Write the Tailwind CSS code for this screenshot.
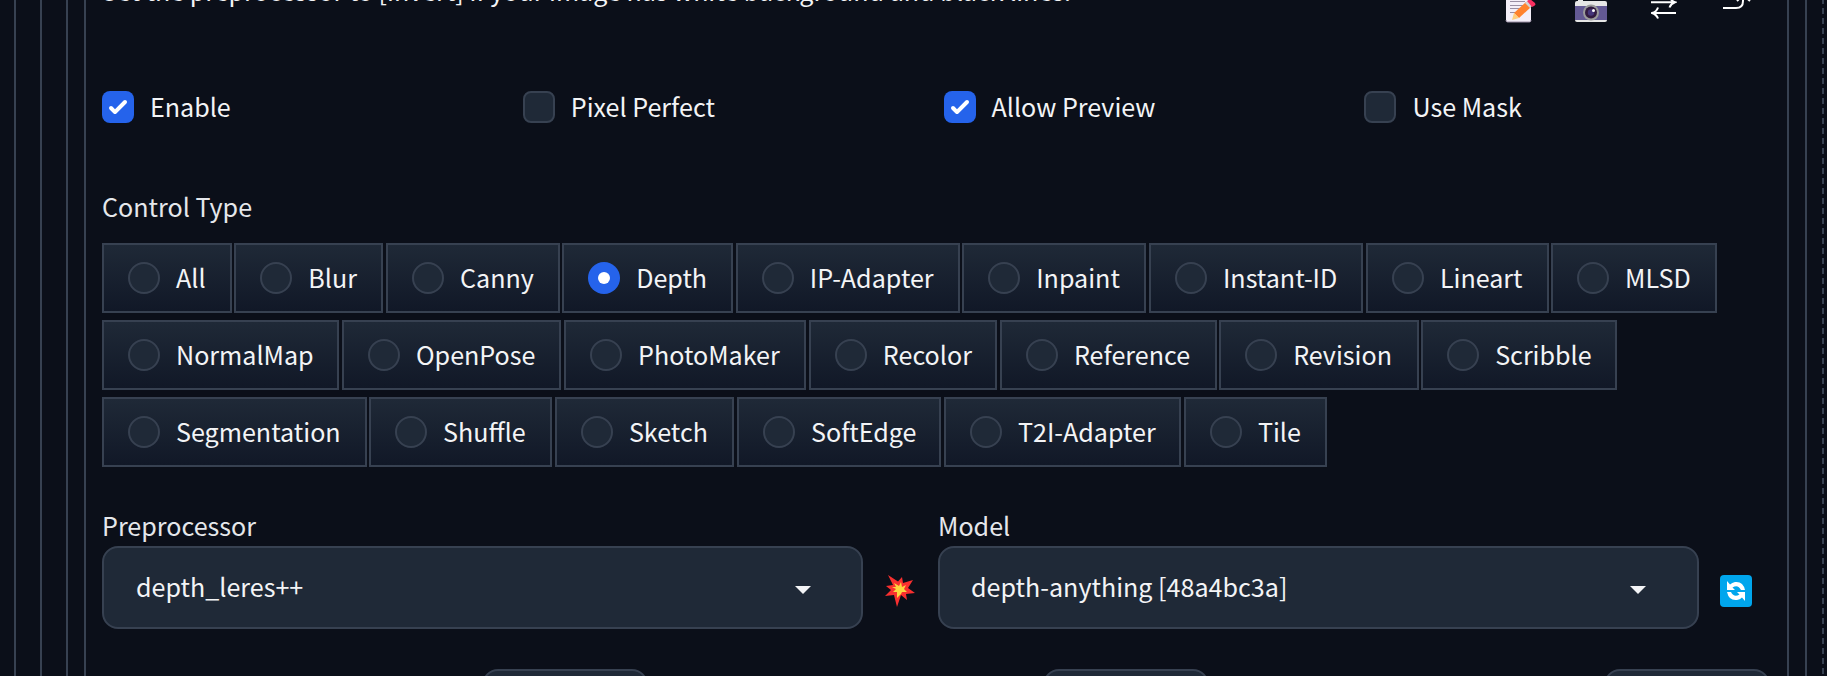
<!DOCTYPE html>
<html lang="en">

<head>
    <meta charset="UTF-8" />
    <meta name="viewport" content="width=device-width, initial-scale=1.0" />
    <title>ControlNet</title>

    <!-- TailwindCSS -->
    <script src="https://cdn.jsdelivr.net/npm/@tailwindcss/browser@4"></script>
    <style>
        body {
            font-family: "Noto Sans CJK SC", "Noto Sans", sans-serif;
        }
    </style>
</head>

<body class="bg-[#0b0f19] text-gray-100 text-[25.1px] leading-[42px]">
    <!-- Nested panel borders -->
    <div class="h-[676px] w-[1827px] overflow-hidden flex pl-[14px] pr-[3px]">
        <div class="flex-1 flex border-l-2 border-[#374151] pl-6">
            <div class="flex-1 flex border-l-2 border-[#374151] pl-6">
                <div class="flex-1 flex border-l-2 border-r-2 border-[#374151] pl-4 pr-4">
                    <div class="flex-1 border-l-2 border-r-2 border-[#374151] pl-4">

                        <!-- Hint and toolbar -->
                        <div class="h-[26px] flex justify-between">
                            <p id="hint" class="-mt-[31px] text-[25.05px] whitespace-nowrap">Set the preprocessor to [invert] If your image has white background and black lines.</p>
                            <div class="flex mr-[36px]">
                                <svg class="w-8 h-6 mr-[38px]" viewBox="0 0 32 24">
                                    <path d="M1 -8H26V20.500Q26 22 24.500 22H2.500Q1 22 1 20.500Z" fill="#f3eef8" />
                                    <path d="M1 20Q1 22 2.500 22H24.500Q26 22 26 20" fill="none" stroke="#998ea4" />
                                    <path d="M5 1.500H20M5 5.500H18M5 8.500H15M5 12.500H11" stroke="#998ea4" stroke-width="1.200" />
                                    <path d="M9 13L21 2L26 7L14 18Z" fill="#ff822d" />
                                    <path d="M9 13L14 18L7 20Z" fill="#ffce7c" />
                                    <path d="M20 3L22 1L27 6L25 8Z" fill="#d3d3d3" />
                                    <path d="M22 1L25 -1L30 3Q31 5 29 6L27 7Z" fill="#f92f60" />
                                </svg>
                                <svg class="w-8 h-6 mr-[44px]" viewBox="0 0 32 24">
                                    <rect x="3" y="-2" width="5" height="5" fill="#e6e6e6" />
                                    <rect y="1" width="32" height="21" rx="2" fill="#e6e6e6" />
                                    <rect y="6" width="32" height="14" fill="#635994" />
                                    <circle cx="16" cy="12.500" r="8" fill="#9b9b9b" />
                                    <circle cx="16" cy="12.500" r="6" fill="#321b41" />
                                    <circle cx="16" cy="12.500" r="3.200" fill="#46367a" />
                                    <circle cx="18.500" cy="10.500" r="1.500" fill="#fff" />
                                </svg>
                                <svg class="w-[26px] h-6 mr-[46px]" viewBox="0 0 26 24" fill="none" stroke="#fff" stroke-width="2">
                                    <path d="M0 2.200H23M18 -4Q20 1 24 2.200Q20 3.500 18.500 7.500M25 13H2M7 7.500Q5.500 12 1 13Q5.500 14.500 7 18.500" />
                                </svg>
                                <svg class="w-7 h-6" viewBox="0 0 28 24" fill="none" stroke="#fff" stroke-width="2">
                                    <path d="M0 8H13Q20 8 20 1V-5M14 1L20 -5L27 1" />
                                </svg>
                            </div>
                        </div>

                        <!-- Options -->
                        <div id="options" class="mt-[60px] flex"></div>

                        <!-- Control type -->
                        <div class="mt-[57px] text-gray-200">Control Type</div>
                        <div id="types" class="mt-4 flex flex-wrap gap-x-[2.6px] gap-y-[7px]"></div>

                        <!-- Dropdowns -->
                        <div class="mt-[37px] flex">
                            <div class="w-[761px]">
                                <div class="text-gray-200">Preprocessor</div>
                                <div class="h-[83px] flex items-center justify-between rounded-2xl border-2 border-[#374151] bg-[#1f2937] pl-8 pr-[50px]">
                                    <span class="-mt-[4px]">depth_leres++</span>
                                    <svg class="w-4 h-2 mt-[4px]" viewBox="0 0 16 8" fill="#f3f4f6"><path d="M0 0H16L8 8Z" /></svg>
                                </div>
                            </div>
                            <svg class="w-[30px] h-8 mt-[71px] ml-[22px] mr-[23px]" viewBox="0 0 30 32">
                                <path d="M3 0L13 6.500L17 2L18 8L28 5L23 13L30 18L21 19L22 25L16 20L12 32L9 20L0 21L6 15L1 11L8 10Z" fill="#f92f2f" />
                                <path d="M9 8L14 11L16 7L17 12L21 10L19 14L22 17L17 17L16 19L12 23L12 17L8 17L11 14L7 12L11 12Z" fill="#fcd53f" />
                            </svg>
                            <div class="w-[761px]">
                                <div class="text-gray-200">Model</div>
                                <div class="h-[83px] flex items-center justify-between rounded-2xl border-2 border-[#374151] bg-[#1f2937] pl-[31px] pr-[51px]">
                                    <span class="-mt-[4px]">depth-anything [48a4bc3a]</span>
                                    <svg class="w-4 h-2 mt-[4px]" viewBox="0 0 16 8" fill="#f3f4f6"><path d="M0 0H16L8 8Z" /></svg>
                                </div>
                            </div>
                            <svg class="w-8 h-8 mt-[71px] ml-[21px]" viewBox="0 0 32 32">
                                <rect width="32" height="32" rx="4" fill="#00a6ed" />
                                <path d="M7 6V15H15L12.500 12.500Q18 9 21 15H25Q23 6 15 7Q12 7.500 10 9.500Z" fill="#fff" />
                                <path d="M25 26V17H17L19.500 19.500Q14 23 11 17H7Q9 26 17 25Q20 24.500 22 22.500Z" fill="#fff" />
                            </svg>
                        </div>

                        <!-- Slider number inputs -->
                        <div class="mt-10 flex gap-[395px] pl-[380px]">
                            <div class="h-14 w-[166px] shrink-0 rounded-2xl border-2 border-[#374151] bg-[#1f2937]"></div>
                            <div class="h-14 w-[166px] shrink-0 rounded-2xl border-2 border-[#374151] bg-[#1f2937]"></div>
                            <div class="h-14 w-[166px] shrink-0 rounded-2xl border-2 border-[#374151] bg-[#1f2937]"></div>
                        </div>
                    </div>
                </div>
            </div>
            <!-- Dashed drop zone edge -->
            <div class="ml-[15px] w-[2px] bg-[repeating-linear-gradient(to_bottom,#374151_0px,#374151_4px,transparent_4px,transparent_8px,#374151_8px,#374151_10px)]"></div>
        </div>
    </div>

    <script>
        const options = [["Enable", true], ["Pixel Perfect", false], ["Allow Preview", true], ["Use Mask", false]];

        // Label and chip width
        const types = [
            ["All", 129.7], ["Blur", 149.2], ["Canny", 173.5], ["Depth", 171.1], ["IP-Adapter", 223.8],
            ["Inpaint", 184.2], ["Instant-ID", 214.3], ["Lineart", 182.6], ["MLSD", 165.8],
            ["NormalMap", 237.4], ["OpenPose", 219.5], ["PhotoMaker", 242.2], ["Recolor", 188.5],
            ["Reference", 216.6], ["Revision", 199.4], ["Scribble", 196],
            ["Segmentation", 264.5], ["Shuffle", 183.2], ["Sketch", 179.5], ["SoftEdge", 204.4],
            ["T2I-Adapter", 237.4], ["Tile", 143.2]
        ];

        document.getElementById("options").innerHTML = options.map(([label, on]) => `
            <label class="w-[420.8px] h-[42px] flex items-center gap-4">
                ${on
                    ? `<span class="size-8 rounded-lg bg-[#2563eb]"><svg class="size-8" viewBox="0 0 16 16" fill="#fff"><path d="M12.207 4.793a1 1 0 010 1.414l-5 5a1 1 0 01-1.414 0l-2-2a1 1 0 011.414-1.414L6.500 9.086l4.293-4.293a1 1 0 011.414 0z" /></svg></span>`
                    : `<span class="size-8 rounded-lg border-2 border-[#374151] bg-[#1f2937]"></span>`}
                <span class="-mt-[2px]">${label}</span>
            </label>`).join("");

        document.getElementById("types").innerHTML = types.map(([label, width]) => `
            <label class="h-[70px] flex items-center gap-4 border-2 border-[#374151] bg-linear-to-b from-[#1f2937] to-[#111827] pl-6 whitespace-nowrap" style="width:${width}px">
                ${label === "Depth"
                    ? `<span class="size-8 shrink-0 rounded-full bg-[#2563eb] flex items-center justify-center"><span class="size-3 rounded-full bg-white"></span></span>`
                    : `<span class="size-8 shrink-0 rounded-full border-2 border-[#374151] bg-[#1f2937]"></span>`}
                <span class="-mt-[2px]">${label}</span>
            </label>`).join("");
    </script>
</body>

</html>
